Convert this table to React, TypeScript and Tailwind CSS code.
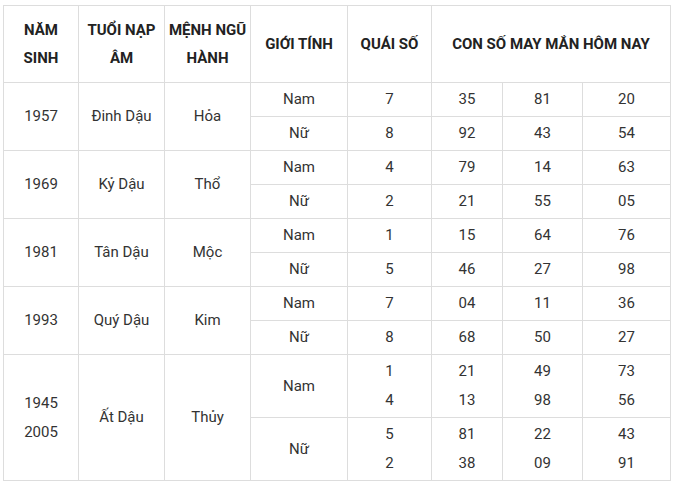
import React from "react";

type Sub = { g: string; q: string[]; n: string[][] };
type Group = { years: string[]; tuoi: string; menh: string; subs: Sub[]; tall?: boolean };

const groups: Group[] = [
  { years: ["1957"], tuoi: "Đinh Dậu", menh: "Hỏa", subs: [
    { g: "Nam", q: ["7"], n: [["35", "81", "20"]] },
    { g: "Nữ", q: ["8"], n: [["92", "43", "54"]] },
  ] },
  { years: ["1969"], tuoi: "Kỷ Dậu", menh: "Thổ", subs: [
    { g: "Nam", q: ["4"], n: [["79", "14", "63"]] },
    { g: "Nữ", q: ["2"], n: [["21", "55", "05"]] },
  ] },
  { years: ["1981"], tuoi: "Tân Dậu", menh: "Mộc", subs: [
    { g: "Nam", q: ["1"], n: [["15", "64", "76"]] },
    { g: "Nữ", q: ["5"], n: [["46", "27", "98"]] },
  ] },
  { years: ["1993"], tuoi: "Quý Dậu", menh: "Kim", subs: [
    { g: "Nam", q: ["7"], n: [["04", "11", "36"]] },
    { g: "Nữ", q: ["8"], n: [["68", "50", "27"]] },
  ] },
  { years: ["1945", "2005"], tuoi: "Ất Dậu", menh: "Thủy", tall: true, subs: [
    { g: "Nam", q: ["1", "4"], n: [["21", "49", "73"], ["13", "98", "56"]] },
    { g: "Nữ", q: ["5", "2"], n: [["81", "22", "43"], ["38", "09", "91"]] },
  ] },
];

const td = "border border-[#dddddd] text-center align-middle p-0";

function Lines({ items }: { items: string[] }) {
  return (
    <>
      {items.map((t, i) => (
        <div key={i} className="leading-[29px]">{t}</div>
      ))}
    </>
  );
}

export default function App() {
  return (
    <div className="bg-white w-[675px] h-[487px] pt-[5px] pl-[3px]" style={{ fontFamily: "Roboto, 'Liberation Sans', sans-serif" }}>
      <table className="table-fixed border-collapse w-[667px] text-[15px] text-[#333333]">
        <colgroup>
          <col className="w-[75px]" />
          <col className="w-[86px]" />
          <col className="w-[86px]" />
          <col className="w-[97px]" />
          <col className="w-[84px]" />
          <col className="w-[71px]" />
          <col className="w-[80px]" />
          <col className="w-[88px]" />
        </colgroup>
        <thead>
          <tr className="h-[77px]">
            <th className={`${td} font-bold leading-[28px] text-[#222222]`}>NĂM<br />SINH</th>
            <th className={`${td} font-bold leading-[28px] text-[#222222]`}>TUỔI NẠP<br />ÂM</th>
            <th className={`${td} font-bold leading-[28px] text-[#222222]`}>MỆNH NGŨ<br />HÀNH</th>
            <th className={`${td} font-bold leading-[28px] text-[#222222]`}>GIỚI TÍNH</th>
            <th className={`${td} font-bold leading-[28px] text-[#222222]`}>QUÁI SỐ</th>
            <th colSpan={3} className={`${td} font-bold leading-[28px] text-[#222222]`}>CON SỐ MAY MẮN HÔM NAY</th>
          </tr>
        </thead>
        <tbody>
          {groups.map((gr, gi) =>
            gr.subs.map((s, si) => (
              <tr key={`${gi}-${si}`} className={gr.tall ? "h-[63px]" : "h-[34px]"}>
                {si === 0 && (
                  <>
                    <td rowSpan={2} className={td}><Lines items={gr.years} /></td>
                    <td rowSpan={2} className={td}>{gr.tuoi}</td>
                    <td rowSpan={2} className={td}>{gr.menh}</td>
                  </>
                )}
                <td className={td}>{s.g}</td>
                <td className={td}><Lines items={s.q} /></td>
                {[0, 1, 2].map((c) => (
                  <td key={c} className={td}><Lines items={s.n.map((r) => r[c])} /></td>
                ))}
              </tr>
            ))
          )}
        </tbody>
      </table>
    </div>
  );
}
